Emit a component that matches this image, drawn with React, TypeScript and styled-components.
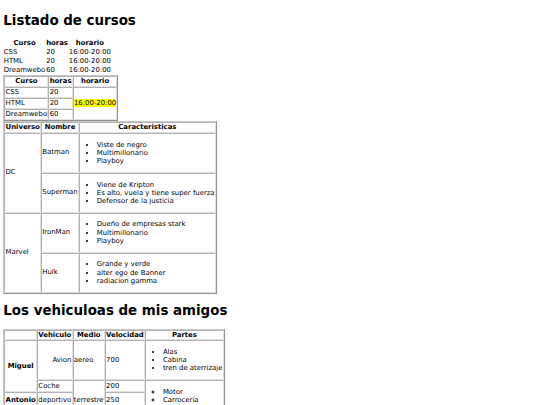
import React from "react";
import styled, { createGlobalStyle } from "styled-components";

const GlobalStyle = createGlobalStyle`
  html { background: #fff; }
  body {
    margin: 3.3px;
    font-family: "DejaVu Sans", Verdana, sans-serif;
    font-size: 6.9px;
    line-height: 8.4px;
    color: #000;
  }
`;

const Title = styled.h1`
  font-size: 13.4px;
  line-height: 16.2px;
  font-weight: bold;
  margin: 9.4px 0;
`;

const PlainTable = styled.table`
  border-collapse: separate;
  border-spacing: 0.83px;
  font-size: inherit;
  line-height: inherit;
`;

const PlainCell = styled.td`
  padding: 0.42px;
  text-align: left;
  vertical-align: middle;
`;

const PlainHead = styled.th`
  padding: 0.42px;
  font-weight: bold;
  text-align: center;
  vertical-align: middle;
`;

const GridTable = styled.table`
  border-collapse: separate;
  border-spacing: 0.83px;
  border: 1px solid;
  border-color: #c8c8c8 #909090 #909090 #c8c8c8;
  font-size: inherit;
  line-height: inherit;
`;

const Row = styled.tr<{ $h?: number }>`
  height: ${(p) => (p.$h ? `${p.$h}px` : "auto")};
`;

const Cell = styled.td<{ $align?: "left" | "right" | "center" }>`
  padding: 0.25px;
  border: 1px solid;
  border-color: #b2b2b2 #e0e0e0 #e0e0e0 #b2b2b2;
  text-align: ${(p) => p.$align ?? "left"};
  vertical-align: middle;
`;

const HeadCell = styled.th`
  padding: 0.25px;
  border: 1px solid;
  border-color: #b2b2b2 #e0e0e0 #e0e0e0 #b2b2b2;
  font-weight: bold;
  text-align: center;
  vertical-align: middle;
`;

const Highlight = styled.span`
  background: #ffff00;
`;

const List = styled.ul<{ $marker?: "disc" | "circle" }>`
  margin: 6.6px 0;
  padding-left: 16.6px;
  list-style-type: ${(p) => p.$marker ?? "disc"};
`;

const Item = styled.li`
  line-height: 8.1px;
`;

const cursos = [
  { curso: "CSS", horas: "20", horario: "16:00-20:00" },
  { curso: "HTML", horas: "20", horario: "16:00-20:00" },
  { curso: "Dreamwebo", horas: "60", horario: "16:00-20:00" },
];

function Bullets({ items, marker }: { items: string[]; marker?: "disc" | "circle" }) {
  return (
    <List $marker={marker}>
      {items.map((t) => (
        <Item key={t}>{t}</Item>
      ))}
    </List>
  );
}

export default function App() {
  return (
    <>
      <GlobalStyle />
      <Title>Listado de cursos</Title>

      <PlainTable>
        <tbody>
          <tr>
            <PlainHead>Curso</PlainHead>
            <PlainHead>horas</PlainHead>
            <PlainHead>horario</PlainHead>
          </tr>
          {cursos.map((c) => (
            <tr key={c.curso}>
              <PlainCell>{c.curso}</PlainCell>
              <PlainCell>{c.horas}</PlainCell>
              <PlainCell>{c.horario}</PlainCell>
            </tr>
          ))}
        </tbody>
      </PlainTable>

      <GridTable>
        <tbody>
          <tr>
            <HeadCell>Curso</HeadCell>
            <HeadCell>horas</HeadCell>
            <HeadCell>horario</HeadCell>
          </tr>
          <tr>
            <Cell>CSS</Cell>
            <Cell>20</Cell>
            <Cell rowSpan={3}>
              <Highlight>16:00-20:00</Highlight>
            </Cell>
          </tr>
          <tr>
            <Cell>HTML</Cell>
            <Cell>20</Cell>
          </tr>
          <tr>
            <Cell>Dreamwebo</Cell>
            <Cell>60</Cell>
          </tr>
        </tbody>
      </GridTable>

      <GridTable>
        <tbody>
          <tr>
            <HeadCell>Universo</HeadCell>
            <HeadCell>Nombre</HeadCell>
            <HeadCell>Caracteristicas</HeadCell>
          </tr>
          <tr>
            <Cell rowSpan={2}>DC</Cell>
            <Cell>Batman</Cell>
            <Cell>
              <Bullets items={["Viste de negro", "Multimillonario", "Playboy"]} />
            </Cell>
          </tr>
          <tr>
            <Cell>Superman</Cell>
            <Cell>
              <Bullets
                items={["Viene de Kripton", "Es alto, vuela y tiene super fuerza", "Defensor de la justicia"]}
              />
            </Cell>
          </tr>
          <tr>
            <Cell rowSpan={2}>Marvel</Cell>
            <Cell>IronMan</Cell>
            <Cell>
              <Bullets items={["Dueño de empresas stark", "Multimillonario", "Playboy"]} />
            </Cell>
          </tr>
          <tr>
            <Cell>Hulk</Cell>
            <Cell>
              <Bullets items={["Grande y verde", "alter ego de Banner", "radiacion gamma"]} />
            </Cell>
          </tr>
        </tbody>
      </GridTable>

      <Title>Los vehiculoas de mis amigos</Title>

      <GridTable>
        <tbody>
          <tr>
            <HeadCell></HeadCell>
            <HeadCell>Vehiculo</HeadCell>
            <HeadCell>Medio</HeadCell>
            <HeadCell>Velocidad</HeadCell>
            <HeadCell>Partes</HeadCell>
          </tr>
          <tr>
            <HeadCell rowSpan={2}>Miguel</HeadCell>
            <Cell $align="right">Avion</Cell>
            <Cell>aereo</Cell>
            <Cell>700</Cell>
            <Cell>
              <Bullets items={["Alas", "Cabina", "tren de aterrizaje"]} />
            </Cell>
          </tr>
          <Row $h={10}>
            <Cell>Coche</Cell>
            <Cell rowSpan={3}>terrestre</Cell>
            <Cell>200</Cell>
            <Cell rowSpan={3}>
              <Bullets marker="circle" items={["Motor", "Carrocería", "Ruedas"]} />
            </Cell>
          </Row>
          <Row $h={14.5}>
            <HeadCell>Antonio</HeadCell>
            <Cell>deportivo</Cell>
            <Cell>250</Cell>
          </Row>
          <Row $h={12}>
            <HeadCell>Luis</HeadCell>
            <Cell>moto</Cell>
            <Cell>180</Cell>
          </Row>
        </tbody>
      </GridTable>
    </>
  );
}
